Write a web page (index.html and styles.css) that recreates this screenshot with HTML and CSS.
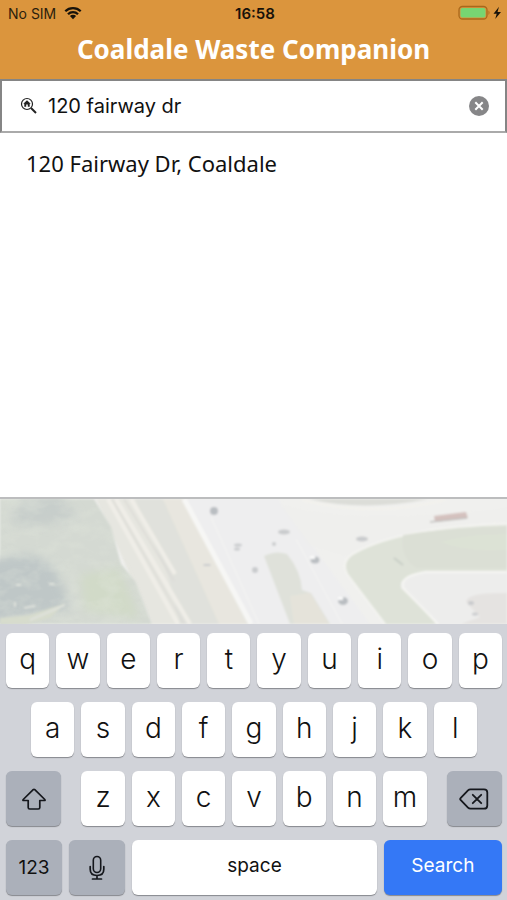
FILE: index.html
```html
<!DOCTYPE html>
<html lang="en">
<head>
<meta charset="utf-8">
<meta name="viewport" content="width=device-width, initial-scale=1">
<title>Coaldale Waste Companion</title>
<link rel="stylesheet" href="styles.css">
</head>
<body>
<header class="header">
  <div class="status">
    <div class="carrier">
      <span>No SIM</span>
      <svg width="18" height="14" viewBox="0 0 18 14" aria-hidden="true">
        <path d="M1.3 5.2a11 11 0 0 1 15.4 0M4 8.2a7 7 0 0 1 10 0" fill="none" stroke="#17120a" stroke-width="2.3"/>
        <path d="M9 13.2 5.9 10.1a4.4 4.4 0 0 1 6.2 0z" fill="#17120a"/>
      </svg>
    </div>
    <span class="time">16:58</span>
    <div class="battery">
      <svg width="44" height="16" viewBox="0 0 44 16" aria-hidden="true">
        <rect x="1" y="1.5" width="28" height="12.500" rx="3.500" fill="none" stroke="#a8681c" stroke-width="1.300"/>
        <rect x="2.500" y="3" width="25" height="9.500" rx="2" fill="#77d572"/>
        <path d="M30.500 5.500q2 2.200 0 4.500z" fill="#a8681c"/>
        <path d="M41 1.800 35.500 8.700h3.200L37.200 14 43 7h-3.500z" fill="#17120a"/>
      </svg>
    </div>
  </div>
  <h1 class="title">Coaldale Waste Companion</h1>
</header>

<main class="main">
  <form class="search">
    <svg class="search-icon" width="18" height="18" viewBox="0 0 18 18" aria-hidden="true">
      <circle cx="7" cy="7" r="5.500" fill="none" stroke="#222" stroke-width="1.200"/>
      <path d="m11 11 5 5" stroke="#222" stroke-width="2"/>
      <path d="M7 3.200 3.300 6.700h1v3.100h1.900V7.500h1.600v2.300h1.900V6.700h1z" fill="#222"/>
    </svg>
    <input class="search-input" type="text" value="120 fairway dr" aria-label="Address">
    <button class="clear" type="reset" aria-label="Clear">
      <svg width="20" height="20" viewBox="0 0 20 20" aria-hidden="true">
        <circle cx="10" cy="10" r="10" fill="#868688"/>
        <path d="m6.300 6.300 7.400 7.400m0-7.400-7.400 7.400" stroke="#fff" stroke-width="2"/>
      </svg>
    </button>
  </form>
  <ul class="results">
    <li><a class="result" href="#">120 Fairway Dr, Coaldale</a></li>
  </ul>
</main>

<div class="aerial">
  <svg class="aerial-art" viewBox="0 0 507 125" preserveAspectRatio="xMidYMid slice" aria-hidden="true">
    <defs>
      <filter id="soft" x="-5%" y="-5%" width="110%" height="110%"><feGaussianBlur stdDeviation="0.9"/></filter>
      <filter id="wide" x="-20%" y="-20%" width="140%" height="140%"><feGaussianBlur stdDeviation="5"/></filter>
      <filter id="leaves" x="0" y="0" width="100%" height="100%" color-interpolation-filters="sRGB">
        <feTurbulence type="fractalNoise" baseFrequency="0.05 0.08" numOctaves="3" seed="8"/>
        <feColorMatrix values="0 0 0 0 0.88  0 0 0 0 0.9  0 0 0 0 0.86  2.600 0 0 0 -1.050"/>
        <feComposite in2="SourceGraphic" operator="in"/>
      </filter>
    </defs>
    <rect width="507" height="125" fill="#f0f0ee"/>
    <g filter="url(#soft)">
      <path d="M96 0h88l66 125h-98z" fill="#e6e6e0"/>
      <path d="M135 0h27l38 55 38 70h-58l-12-48z" fill="#e0e1dc"/>
      <path d="M163 0h20l64 125h-28l-20-45z" fill="#e8e6df"/>
      <path d="m108 0 70 125M116 0l74 125M131 0l44 75" fill="none" stroke="#f0eee8" stroke-width="4"/>
      <path d="m112 0 72 125M124 0l50 82" fill="none" stroke="#dddcd7" stroke-width="1.500"/>
      <path d="M183 0h95l92 125H252z" fill="#eeeeef"/>
      <path d="m184 0 67 125" stroke="#f7f7f5" stroke-width="5"/>
      <path d="m211 18 48 107M296 40l46 85" stroke="#f3f3f2" stroke-width="1.500"/>
      <path d="M280 5q70 22 227 4v14Q400 26 354 60l-45-14z" fill="#efefed"/>
      <path d="M309 0q54 13 119 0z" fill="#dcddd8"/>
      <path d="M302 1q70 18 143 0" fill="none" stroke="#f3f2ed" stroke-width="2"/>
      <path d="M264 57q12-6 23-2 14 17 15 36l9 3 19 31h-40z" fill="#dfe1da"/>
      <path d="m290 97 20-3 19 31h-35z" fill="#e5e3da"/>
      <path d="M507 25Q403 28 356 54q-14 6-9 21l38 50h51l-31-39q-1-14 33-14h69z" fill="#dee2d8"/>
      <path d="M507 25Q403 28 356 53q-16 8-9 22l38 50" fill="none" stroke="#f4f4f1" stroke-width="2"/>
      <path d="M403 36q50-8 104-8v41h-90q-17-10-14-33z" fill="#dbdfd5"/>
      <path d="M440 43q30-9 67-8v16q-40 3-67-8z" fill="#dce2d5"/>
      <path d="M507 73h-82q-27 4-24 16l37 36h69z" fill="#ededec"/>
      <path d="M507 73h-82q-28 5-21 17l34 35" fill="none" stroke="#f7f7f4" stroke-width="2"/>
      <path d="M507 94q-40-1-41 9l14 15-19 7h46z" fill="#e5e3e1"/>
      <path d="m394 59 9 7" fill="none" stroke="#c8cec6" stroke-width="2"/>
      <path d="m434 17 32-4 2 6-33 4z" fill="#d4c1be"/>
      <path d="m430 23 37-4" stroke="#c3c1bf" stroke-width="1.500"/>
      <g fill="#c9cbcd">
        <ellipse cx="284" cy="33" rx="6" ry="2.500"/>
        <ellipse cx="362" cy="40" rx="6" ry="2.500"/>
        <ellipse cx="238" cy="46" rx="4" ry="1.500"/>
        <ellipse cx="237" cy="50" rx="3" ry="1.500"/>
        <ellipse cx="274" cy="45" rx="2" ry="2"/>
        <ellipse cx="255" cy="71" rx="3" ry="3"/>
        <ellipse cx="471" cy="104" rx="3" ry="2"/>
        <ellipse cx="475" cy="115" rx="3" ry="1.500"/>
        <ellipse cx="207" cy="66" rx="4" ry="1"/>
      </g>
      <g fill="#b9bdc1">
        <ellipse cx="214" cy="12" rx="4" ry="4"/>
        <ellipse cx="315" cy="61" rx="4.500" ry="3.500"/>
        <ellipse cx="343" cy="102" rx="5" ry="4"/>
      </g>
      <path d="M310 57h5v3h-5zM338 98h5v3h-5z" fill="#fafafa"/>
    </g>
    <path d="M0 0h94l17 28 10 37 14 17 17 43H0z" fill="#d4d9d2" filter="url(#soft)"/>
    <g filter="url(#wide)">
      <path d="M-10 62q38-14 64 5l18 43-82 15z" fill="#bfc7c7"/>
      <path d="M18 3 60-3 78 17 45 27 12 25z" fill="#c7cecb"/>
      <path d="m80 76 39-7 21 51-55-8z" fill="#d1dac8"/>
    </g>
    <path d="M0 0h94l17 28 10 37 14 17 17 43H0z" fill="#fff" filter="url(#leaves)" opacity="0.350"/>
    <g filter="url(#soft)">
      <path d="M0 119 30 116l36-12-16 15-24 6H0z" fill="#d7dccd"/>
      <path d="m30 121 35-15M15 108v-5M24 109l11-2M16 86h5M49 85h5" stroke="#dfe2dc" stroke-width="2"/>
    </g>
  </svg>
</div>

<section class="keyboard" aria-label="Keyboard">
  <div class="row">
    <button class="key">q</button><button class="key">w</button><button class="key">e</button><button class="key">r</button><button class="key">t</button><button class="key">y</button><button class="key">u</button><button class="key">i</button><button class="key">o</button><button class="key">p</button>
  </div>
  <div class="row row-middle">
    <button class="key">a</button><button class="key">s</button><button class="key">d</button><button class="key">f</button><button class="key">g</button><button class="key">h</button><button class="key">j</button><button class="key">k</button><button class="key">l</button>
  </div>
  <div class="row">
    <button class="key key-grey key-shift" aria-label="Shift">
      <svg width="26" height="24" viewBox="0 0 26 24" aria-hidden="true">
        <path d="M12.200 2.700q.8-.8 1.600 0l10 9.800q.8 1-.5 1h-4.500v7q0 1.500-1.500 1.500H8.700q-1.500 0-1.500-1.500v-7H2.700q-1.300 0-.5-1z" fill="none" stroke="#15171c" stroke-width="1.700" stroke-linejoin="round"/>
      </svg>
    </button>
    <button class="key">z</button><button class="key">x</button><button class="key">c</button><button class="key">v</button><button class="key">b</button><button class="key">n</button><button class="key">m</button>
    <button class="key key-grey key-delete" aria-label="Delete">
      <svg width="30" height="24" viewBox="0 0 30 24" aria-hidden="true">
        <path d="M11.500 2.300H25q3.300 0 3.300 3.300v12.800q0 3.300-3.300 3.300H11.500q-1.500 0-2.500-1L1.800 13.200q-1.200-1.200 0-2.400L9 3.300q1-1 2.500-1zM13.800 7.800l8.400 8.400m0-8.400-8.400 8.400" fill="none" stroke="#15171c" stroke-width="1.800" stroke-linejoin="round" stroke-linecap="round"/>
      </svg>
    </button>
  </div>
  <div class="row row-bottom">
    <button class="key key-grey key-word">123</button>
    <button class="key key-grey" aria-label="Dictate">
      <svg width="18" height="26" viewBox="0 0 18 26" aria-hidden="true">
        <rect x="5.300" y="1.500" width="7.400" height="16" rx="3.700" fill="none" stroke="#15171c" stroke-width="1.600"/>
        <path d="M2.200 11.500v2.800q0 6.200 6.800 6.200t6.800-6.200v-2.800M9 20.500V24M4.500 24h9" fill="none" stroke="#15171c" stroke-width="1.700" stroke-linecap="round"/>
      </svg>
    </button>
    <button class="key key-word">space</button>
    <button class="key key-word key-search">Search</button>
  </div>
</section>
</body>
</html>
```
FILE: styles.css
```css
* {
  box-sizing: border-box;
}

body {
  margin: 0;
  min-height: 100vh;
  display: flex;
  flex-direction: column;
  background: #fff;
  color: #111;
  font-family: Inter, "Liberation Sans", sans-serif;
}

button {
  border: 0;
  padding: 0;
  font: inherit;
  color: inherit;
}

svg {
  display: block;
}

.header {
  background: #db953d;
  padding-bottom: 12px;
}

.status {
  display: grid;
  grid-template-columns: 1fr auto 1fr;
  align-items: center;
  height: 26px;
  padding: 0 5px 0 8px;
  font-size: 14px;
  color: #2b1e0c;
}

.carrier {
  display: flex;
  align-items: center;
  gap: 8px;
}

.time {
  font-weight: 600;
  font-size: 15px;
  color: #17120a;
}

.battery {
  justify-self: end;
}

.title {
  margin: 0;
  padding-top: 6px;
  font: bold 26px/35px "Noto Sans", sans-serif;
  text-align: center;
  color: #fff;
}

.main {
  flex: 1;
  border-bottom: 2px solid #bcbdbe;
}

.search {
  display: flex;
  align-items: center;
  height: 54px;
  padding: 0 16px 0 18px;
  border: 2px solid #858585;
  border-bottom-color: #aaa;
}

.search-input {
  flex: 1;
  min-width: 0;
  border: 0;
  outline: 0;
  padding: 0 10px;
  background: none;
  font: 20px/28px Inter, sans-serif;
  color: #111;
}

.clear {
  background: none;
}

.results {
  margin: 0;
  padding: 15px 26px;
  list-style: none;
}

.result {
  display: block;
  font: 22px/30px "Noto Sans", sans-serif;
  color: #111;
  text-decoration: none;
}

.aerial {
  height: 125px;
  overflow: hidden;
}

.aerial-art {
  width: 100%;
  height: 100%;
}

.keyboard {
  display: grid;
  gap: 14px;
  padding: 9px 5px 5px 6px;
  background: #d1d3d9;
}

.row {
  display: grid;
  grid-template-columns: repeat(20, 1fr);
  gap: 7px;
}

.row-middle .key:first-child {
  grid-column: 2 / span 2;
}

.key {
  grid-column: span 2;
  display: flex;
  align-items: center;
  justify-content: center;
  min-width: 0;
  height: 55px;
  padding-bottom: 4px;
  border-radius: 6px;
  background: #fff;
  box-shadow: 0 1px 1px #86888d;
  font-size: 28px;
  font-weight: 350;
}

.key-grey {
  padding-bottom: 0;
  background: #abb0ba;
}

.key-shift {
  grid-column: span 3;
  margin-right: 13px;
}

.key-delete {
  grid-column: span 3;
  margin-left: 13px;
}

.row-bottom {
  grid-template-columns: 56fr 56fr 244fr 118fr;
}

.row-bottom .key {
  grid-column: auto;
}

.key-word {
  font-size: 19px;
  font-weight: 400;
}

.key-search {
  background: #3478f6;
  color: #fff;
}
```
